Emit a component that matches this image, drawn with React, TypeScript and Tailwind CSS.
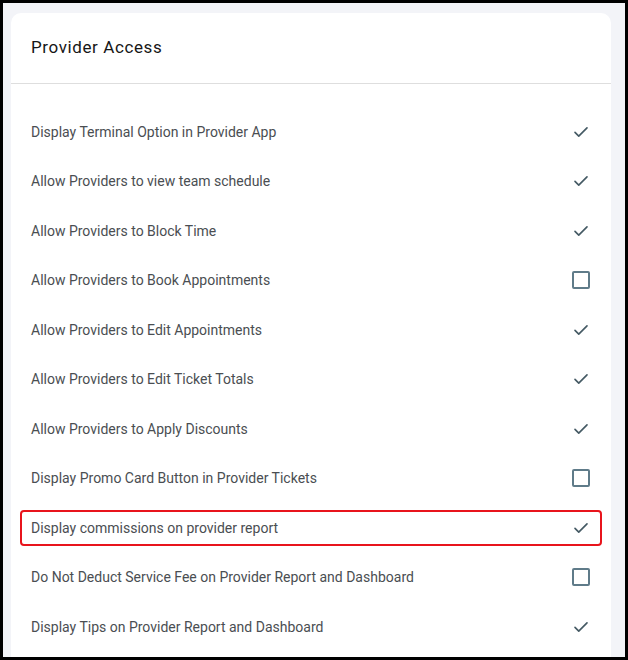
import React from "react";

const rows: { label: string; checked: boolean; highlight?: boolean }[] = [
  { label: "Display Terminal Option in Provider App", checked: true },
  { label: "Allow Providers to view team schedule", checked: true },
  { label: "Allow Providers to Block Time", checked: true },
  { label: "Allow Providers to Book Appointments", checked: false },
  { label: "Allow Providers to Edit Appointments", checked: true },
  { label: "Allow Providers to Edit Ticket Totals", checked: true },
  { label: "Allow Providers to Apply Discounts", checked: true },
  { label: "Display Promo Card Button in Provider Tickets", checked: false },
  { label: "Display commissions on provider report", checked: true, highlight: true },
  { label: "Do Not Deduct Service Fee on Provider Report and Dashboard", checked: false },
  { label: "Display Tips on Provider Report and Dashboard", checked: true },
];

function Check() {
  return (
    <svg width="18" height="18" viewBox="0 0 24 24" fill="none">
      <path d="M4 12.5l5 5L20 6.5" stroke="#455a64" strokeWidth="2.2" strokeLinecap="round" strokeLinejoin="round" />
    </svg>
  );
}

function Box() {
  return <div className="h-[18px] w-[18px] rounded-[2px] border-2 border-[#5f7b89]" />;
}

export default function App() {
  return (
    <div
      className="h-[660px] w-[628px] overflow-hidden border-[3px] border-black bg-[#f3f4f8] pl-[8px] pr-[14px] pt-[10px]"
      style={{ fontFamily: "Roboto, 'Liberation Sans', sans-serif" }}
    >
      <div className="h-[700px] rounded-t-[10px] bg-white">
        <div className="flex h-[71px] items-center border-b border-[#dedede] px-5">
          <h1 className="text-[17px] font-normal tracking-[0.6px] text-[#161616]">Provider Access</h1>
        </div>
        <div className="px-[9px] pt-[23px]">
          {rows.map((r) => (
            <div key={r.label} className="flex h-[49.5px] items-center">
              <div
                className={
                  "flex h-9 w-full items-center justify-between rounded-[4px] border-2 pl-[9px] pr-[10px] " +
                  (r.highlight ? "border-[#e8141c]" : "border-transparent")
                }
              >
                <span className="text-sm text-[#4a4e52]">{r.label}</span>
                {r.checked ? <Check /> : <Box />}
              </div>
            </div>
          ))}
        </div>
      </div>
    </div>
  );
}
